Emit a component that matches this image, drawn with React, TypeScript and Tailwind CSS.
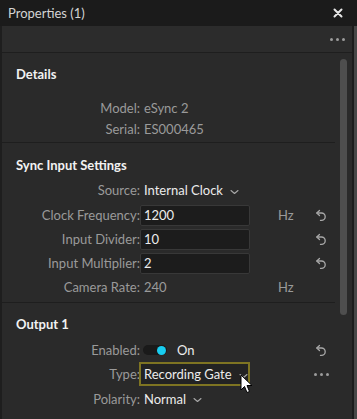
import React from "react";

const Reset = () => (
  <svg width="12" height="13" viewBox="0 0 12 13" fill="none" stroke="#a8a8a8" strokeWidth="1.3" strokeLinecap="round" strokeLinejoin="round">
    <path d="M4.5 1.5 L1.8 4 L4.5 6.5" />
    <path d="M2 4 H6.5 A3.7 3.7 0 0 1 6.5 11.4 H5.5" />
  </svg>
);

const Chevron = () => (
  <svg width="9" height="6" viewBox="0 0 9 6" fill="none" stroke="#a8a8a8" strokeWidth="1.1" strokeLinecap="round" strokeLinejoin="round" className="ml-[7px] mt-[3px]">
    <path d="M1 1.5 L4.5 4.5 L8 1.5" />
  </svg>
);

const Dots = () => (
  <div className="flex gap-[3px]">
    <span className="w-[3px] h-[3px] rounded-full bg-[#9c9c9c]" />
    <span className="w-[3px] h-[3px] rounded-full bg-[#9c9c9c]" />
    <span className="w-[3px] h-[3px] rounded-full bg-[#9c9c9c]" />
  </div>
);

type RowProps = {
  label: string;
  h: string;
  children?: React.ReactNode;
  unit?: string;
  reset?: boolean;
  more?: boolean;
};

const Row = ({ label, h, children, unit, reset, more }: RowProps) => (
  <div className={`flex items-center ${h}`}>
    <div className="w-[138px] text-right text-[#9a9a9a] whitespace-nowrap">{label}</div>
    <div className="w-[110px] flex items-center">{children}</div>
    <div className="w-[60px] pl-[28px] text-[#9a9a9a]">{unit}</div>
    <div className="w-[22px] flex justify-center">
      {reset && <Reset />}
      {more && <Dots />}
    </div>
  </div>
);

const Input = ({ value }: { value: string }) => (
  <div className="w-[110px] h-[21px] bg-[#1c1c1c] border border-[#383838] rounded-[2px] pl-[3px] flex items-center text-[#ececec]">
    {value}
  </div>
);

const Heading = ({ children, mt }: { children: React.ReactNode; mt: string }) => (
  <div className={`${mt} pl-[14px] h-[18px] leading-[18px] text-[#f2f2f2] font-bold`}>{children}</div>
);

export default function App() {
  return (
    <div
      className="w-[357px] h-[419px] flex bg-[#2a2a2a] overflow-hidden text-[13px] leading-[18px]"
      style={{ fontFamily: "Lato, 'Open Sans', sans-serif" }}
    >
      <div className="flex-1 flex flex-col min-w-0">
        <div className="h-[26px] bg-[#1b1b1b] flex items-center justify-between pl-[8px] pr-[9px]">
          <span className="text-[#d4d4d4]">Properties (1)</span>
          <svg width="10" height="10" viewBox="0 0 10 10" stroke="#e6e6e6" strokeWidth="2" strokeLinecap="round">
            <path d="M1.5 1.5 L8.5 8.5 M8.5 1.5 L1.5 8.5" />
          </svg>
        </div>
        <div className="h-[27px] bg-[#2c2c2c] border-l-2 border-b border-[#1e1e1e] flex items-center justify-end pr-[7px]">
          <Dots />
        </div>
        <div className="flex-1 flex border-l-2 border-[#1e1e1e] bg-[#2a2a2a]">
          <div className="w-[333px] flex flex-col">
            <div className="border-b border-[#1e1e1e] pb-[3px]">
              <Heading mt="mt-[12px]">Details</Heading>
              <div className="mt-[14px]">
                <Row label="Model:" h="h-[21px]">
                  <span className="pl-[4px] text-[#9a9a9a]">eSync 2</span>
                </Row>
                <Row label="Serial:" h="h-[21px]">
                  <span className="pl-[4px] text-[#9a9a9a]">ES000465</span>
                </Row>
              </div>
            </div>
            <div className="border-b border-[#1e1e1e] pb-[3px]">
              <Heading mt="mt-[13px]">Sync Input Settings</Heading>
              <div className="mt-[3px]">
                <Row label="Source:" h="h-[26px]">
                  <span className="pl-[4px] text-[#ececec] whitespace-nowrap">Internal Clock</span>
                  <Chevron />
                </Row>
                <Row label="Clock Frequency:" h="h-[24px]" unit="Hz" reset>
                  <Input value="1200" />
                </Row>
                <Row label="Input Divider:" h="h-[24px]" reset>
                  <Input value="10" />
                </Row>
                <Row label="Input Multiplier:" h="h-[24px]" reset>
                  <Input value="2" />
                </Row>
                <Row label="Camera Rate:" h="h-[24px]" unit="Hz">
                  <span className="pl-[4px] text-[#9a9a9a]">240</span>
                </Row>
              </div>
            </div>
            <div>
              <Heading mt="mt-[12px]">Output 1</Heading>
              <div className="mt-[5px]">
                <Row label="Enabled:" h="h-[24px]" reset>
                  <div className="ml-[3px] w-[24px] h-[10px] rounded-full bg-[#1a1a1a] relative">
                    <span className="absolute right-[1px] top-[0.5px] w-[9px] h-[9px] rounded-full bg-[#18cdf0]" />
                  </div>
                  <span className="ml-[10px] text-[#ececec]">On</span>
                </Row>
                <Row label="Type:" h="h-[24px]" more>
                  <div className="relative w-[111px] h-[24px] -ml-[1px] border-2 border-[#7e7422] bg-[#232323] flex items-center pl-[3px] text-[#ececec] whitespace-nowrap">
                    Recording Gate
                    <Chevron />
                    <svg className="absolute left-[99px] top-[10px]" width="13" height="21" viewBox="0 0 13 21">
                      <path d="M1 1 L1 16 L4.5 12.5 L7 18.5 L9.5 17.5 L7 11.5 L12 11.5 Z" fill="#ffffff" stroke="#000000" strokeWidth="1" strokeLinejoin="round" />
                    </svg>
                  </div>
                </Row>
                <Row label="Polarity:" h="h-[25px]">
                  <span className="pl-[4px] text-[#ececec]">Normal</span>
                  <Chevron />
                </Row>
              </div>
            </div>
          </div>
          <div className="flex-1 relative">
            <div className="absolute left-[5px] top-[6px] w-[7px] h-[256px] rounded-full bg-[#4e4e4e]" />
          </div>
        </div>
      </div>
      <div className="w-[5px] flex flex-col">
        <div className="h-[26px] bg-[#1b1b1b]" />
        <div className="flex-1 border-l-2 border-[#1c1c1c] bg-[#474747]" />
      </div>
    </div>
  );
}
